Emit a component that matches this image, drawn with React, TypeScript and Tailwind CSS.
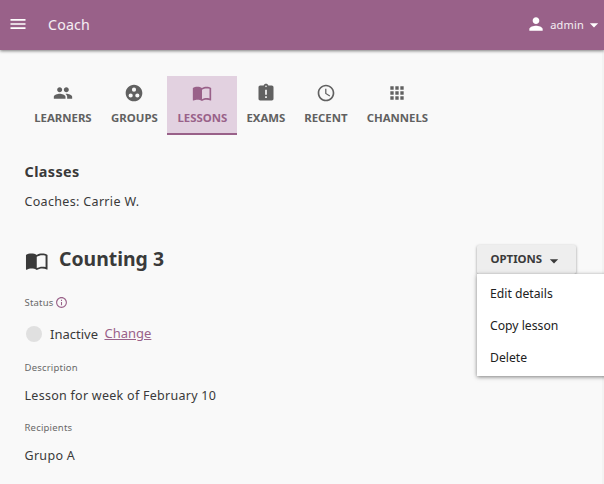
import type { ReactNode } from "react";
import {
  MdAccessTime,
  MdApps,
  MdArrowDropDown,
  MdAssignmentLate,
  MdGroupWork,
  MdImportContacts,
  MdInfoOutline,
  MdMenu,
  MdPeople,
  MdPerson,
} from "react-icons/md";

const tabs = [
  { label: "LEARNERS", icon: MdPeople, width: "w-[77px]" },
  { label: "GROUPS", icon: MdGroupWork, width: "w-[66px]" },
  { label: "LESSONS", icon: MdImportContacts, width: "w-[70px]", active: true },
  { label: "EXAMS", icon: MdAssignmentLate, width: "w-[57px]" },
  { label: "RECENT", icon: MdAccessTime, width: "w-[63px]" },
  { label: "CHANNELS", icon: MdApps, width: "w-[80px]" },
];

function Label({ children }: { children: ReactNode }) {
  return <div className="flex h-4 items-center text-[9.5px] leading-4 tracking-[0.2px] text-[#686868]">{children}</div>;
}

export default function App() {
  return (
    <div className="h-[484px] w-[604px] overflow-hidden bg-[#f3f3f3] font-['Noto_Sans','Open_Sans',sans-serif] text-[#3a3a3a]">
      <header className="relative flex h-[50px] items-center bg-[#996189] text-white shadow-[0_1px_3px_rgba(0,0,0,0.5)]">
        <MdMenu className="-mt-[2px] ml-2 size-5" />
        <span className="ml-5 text-[14.2px] leading-5 tracking-[0.2px] text-white/90">Coach</span>
        <div className="ml-auto flex items-center">
          <MdPerson className="-mt-[2px] size-5" />
          <span className="ml-1 text-[11px] leading-4 tracking-[0.2px] text-white/90">admin</span>
          <MdArrowDropDown className="size-5" />
        </div>
      </header>

      <main className="h-[434px] w-[602px] bg-[#f9f9f9] pt-[26px] pl-6">
        <nav className="flex h-[59px]">
          {tabs.map(({ label, icon: Icon, width, active }) => (
            <a
              key={label}
              className={`flex shrink-0 flex-col items-center border-b-2 pt-[7px] ${width} ${
                active ? "border-[#996189] bg-[#e2d1e0] text-[#996189]" : "border-transparent text-[#616161]"
              }`}
            >
              <Icon className="size-5" />
              <span className="mt-[7px] pl-[0.8px] text-[11.4px] leading-4 font-bold">{label}</span>
            </a>
          ))}
        </nav>

        <div className="pl-[0.5px]">
          <h2 className="mt-[27px] text-[14.4px] leading-5 font-bold tracking-[0.4px]">Classes</h2>
          <p className="mt-[10px] text-[12.5px] leading-5 tracking-[0.33px]">Coaches: Carrie W.</p>

          <div className="mt-8 flex h-[30px]">
            <MdImportContacts className="mt-[5px] size-[23.5px]" />
            <h1 className="ml-[11px] text-[19.4px] leading-[30px] font-bold">Counting 3</h1>
            <div className="relative mt-px mr-[26px] ml-auto h-[29px] w-[99px]">
              <button className="flex h-[29px] w-full items-center rounded-[2px] bg-[#eeeeee] pl-[13.5px] text-[11.4px] font-bold shadow-[0_1px_3px_rgba(0,0,0,0.4)]">
                <span className="-mt-[2px]">OPTIONS</span>
                <MdArrowDropDown className="mt-[3px] ml-[2px] size-5" />
              </button>
              <ul className="absolute top-[29px] left-0 h-[102px] w-[140px] bg-white pt-1 text-[12.2px] text-[#212121] shadow-[0_1px_4px_rgba(0,0,0,0.5)]">
                {["Edit details", "Copy lesson", "Delete"].map((item) => (
                  <li key={item} className="flex h-8 items-center pl-[13px]">
                    {item}
                  </li>
                ))}
              </ul>
            </div>
          </div>

          <div className="mt-[21px]">
            <Label>
              Status
              <MdInfoOutline className="-mt-[2px] ml-px size-[13px] text-[#996189]" />
            </Label>
          </div>
          <div className="mt-[13px] flex h-5 items-center text-[13px] leading-5">
            <span className="-mt-px ml-[1.5px] size-4 rounded-full bg-[#e0e0e0]" />
            <span className="ml-2">Inactive</span>
            <a className="-mt-[2px] ml-[6.5px] text-[#996189] underline">Change</a>
          </div>
          <div className="mt-4">
            <Label>Description</Label>
          </div>
          <p className="mt-[10px] text-[12.5px] leading-5 tracking-[0.27px]">Lesson for week of February 10</p>
          <div className="mt-[14px]">
            <Label>Recipients</Label>
          </div>
          <p className="mt-[10px] text-[12.5px] leading-5 tracking-[0.3px]">Grupo A</p>
        </div>
      </main>
    </div>
  );
}
